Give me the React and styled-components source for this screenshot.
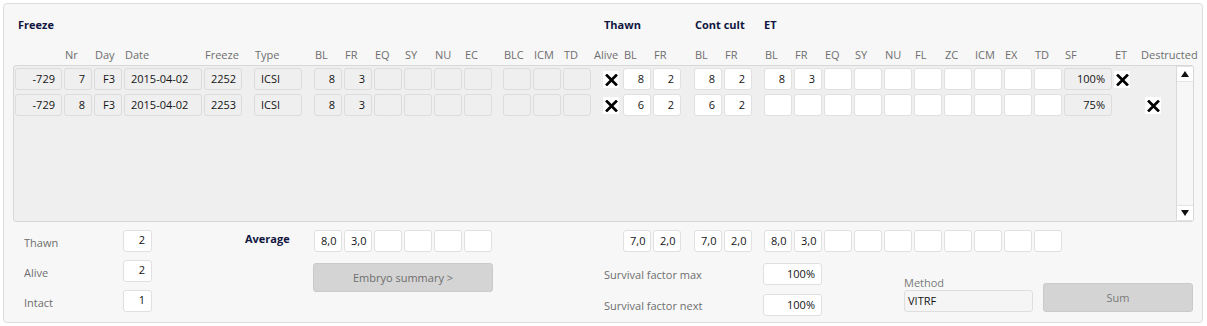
import React from 'react'
import styled, { createGlobalStyle } from 'styled-components'

const GlobalStyle = createGlobalStyle`
  body {
    margin: 0;
    background: #fff;
    font-family: "Open Sans", "Liberation Sans", sans-serif;
    font-size: 11px;
  }
`

// key, header label, width, margin-left, kind, align, inset (for X marks)
const COLUMNS = [
  { key: 'id', label: '', w: 47, ml: 0 },
  { key: 'nr', label: 'Nr' },
  { key: 'day', label: 'Day' },
  { key: 'date', label: 'Date', w: 78, align: 'left' },
  { key: 'fz', label: 'Freeze', w: 38 },
  { key: 'type', label: 'Type', w: 48, ml: 12, align: 'left' },
  { key: 'fbl', label: 'BL', ml: 12 },
  { key: 'ffr', label: 'FR' },
  { key: 'feq', label: 'EQ' },
  { key: 'fsy', label: 'SY' },
  { key: 'fnu', label: 'NU' },
  { key: 'fec', label: 'EC' },
  { key: 'blc', label: 'BLC', ml: 11 },
  { key: 'icm', label: 'ICM' },
  { key: 'td', label: 'TD' },
  { key: 'alive', label: 'Alive', kind: 'mark', inset: 10 },
  { key: 'tbl', label: 'BL', kind: 'in' },
  { key: 'tfr', label: 'FR', kind: 'in' },
  { key: 'cbl', label: 'BL', ml: 13, kind: 'in' },
  { key: 'cfr', label: 'FR', kind: 'in' },
  { key: 'ebl', label: 'BL', ml: 12, kind: 'in' },
  { key: 'efr', label: 'FR', kind: 'in' },
  { key: 'eeq', label: 'EQ', kind: 'in' },
  { key: 'esy', label: 'SY', kind: 'in' },
  { key: 'enu', label: 'NU', kind: 'in' },
  { key: 'efl', label: 'FL', kind: 'in' },
  { key: 'ezc', label: 'ZC', kind: 'in' },
  { key: 'eicm', label: 'ICM', kind: 'in' },
  { key: 'eex', label: 'EX', kind: 'in' },
  { key: 'etd', label: 'TD', kind: 'in' },
  { key: 'sf', label: 'SF', w: 48 },
  { key: 'et', label: 'ET', w: 24, kind: 'mark', inset: 0 },
  { key: 'des', label: 'Destructed', w: 34, kind: 'mark', inset: 5 },
]

const ROWS = [
  { id: '-729', nr: '7', day: 'F3', date: '2015-04-02', fz: '2252', type: 'ICSI', fbl: '8', ffr: '3',
    alive: true, tbl: '8', tfr: '2', cbl: '8', cfr: '2', ebl: '8', efr: '3', sf: '100%', et: true },
  { id: '-729', nr: '8', day: 'F3', date: '2015-04-02', fz: '2253', type: 'ICSI', fbl: '8', ffr: '3',
    alive: true, tbl: '6', tfr: '2', cbl: '6', cfr: '2', sf: '75%', des: true },
]

const TITLES = [
  { text: 'Freeze', w: 586 },
  { text: 'Thawn', w: 91 },
  { text: 'Cont cult', w: 69 },
  { text: 'ET', w: 60 },
]

const FREEZE_AVG = ['8,0', '3,0', '', '', '', '']
const AFTER_AVG = [
  { v: '7,0', ml: 0 }, { v: '2,0' },
  { v: '7,0', ml: 13 }, { v: '2,0' },
  { v: '8,0', ml: 12 }, { v: '3,0' }, { v: '' }, { v: '' }, { v: '' },
  { v: '' }, { v: '' }, { v: '' }, { v: '' }, { v: '' },
]

const STATS = [
  { label: 'Thawn', value: '2' },
  { label: 'Alive', value: '2' },
  { label: 'Intact', value: '1' },
]

const XMark = () => (
  <svg width="13" height="12" viewBox="0 0 13 12">
    <path d="M2 1.5 L11 10.5 M11 1.5 L2 10.5" stroke="#000" strokeWidth="2.7" strokeLinecap="square" />
  </svg>
)

const Arrow = ({ down }) => (
  <svg width="8" height="6" viewBox="0 0 8 6">
    <path d={down ? 'M0 0 H8 L4 6 Z' : 'M0 6 H8 L4 0 Z'} fill="#111" />
  </svg>
)

const App = () => {
  return (
    <>
      <GlobalStyle />
      <Panel>
        <TitleRow>
          {TITLES.map(t => (
            <Title key={t.text} w={t.w}>{t.text}</Title>
          ))}
        </TitleRow>

        <HeaderRow>
          {COLUMNS.map(c => (
            <HeadCell key={c.key} w={c.w ?? 28} ml={c.ml ?? 2}>{c.label}</HeadCell>
          ))}
        </HeaderRow>

        <Grid>
          <Rows>
            {ROWS.map((r, i) => (
              <Row key={i}>
                {COLUMNS.map(c => {
                  const w = c.w ?? 28
                  const ml = c.ml ?? 2
                  if (c.kind === 'mark') {
                    return (
                      <MarkCell key={c.key} w={w} ml={ml} inset={c.inset}>
                        {r[c.key] && <CheckBox><XMark /></CheckBox>}
                      </MarkCell>
                    )
                  }
                  return (
                    <Cell key={c.key} w={w} ml={ml} white={c.kind === 'in'} align={c.align}>
                      {r[c.key] ?? ''}
                    </Cell>
                  )
                })}
              </Row>
            ))}
          </Rows>
          <Scrollbar>
            <ScrollBtn><Arrow /></ScrollBtn>
            <ScrollBtn><Arrow down /></ScrollBtn>
          </Scrollbar>
        </Grid>

        <Bottom>
          <Stats>
            {STATS.map(s => (
              <StatRow key={s.label}>
                <StatLabel>{s.label}</StatLabel>
                <StatBox>{s.value}</StatBox>
              </StatRow>
            ))}
          </Stats>

          <Middle>
            <AvgRow>
              <AvgLabel>Average</AvgLabel>
              {FREEZE_AVG.map((v, i) => (
                <Cell key={i} w={28} ml={2} white align="center">{v}</Cell>
              ))}
            </AvgRow>
            <SummaryButton>Embryo summary &gt;</SummaryButton>
          </Middle>

          <RightBlock>
            <AvgRow>
              {AFTER_AVG.map((a, i) => (
                <Cell key={i} w={28} ml={a.ml ?? 2} white align="center">{a.v}</Cell>
              ))}
            </AvgRow>
            <Lower>
              <SurvivalCol>
                <SurvivalRow>
                  <SurvivalLabel>Survival factor max</SurvivalLabel>
                  <Cell w={59} ml={0} white>100%</Cell>
                </SurvivalRow>
                <SurvivalRow>
                  <SurvivalLabel>Survival factor next</SurvivalLabel>
                  <Cell w={59} ml={0} white>100%</Cell>
                </SurvivalRow>
              </SurvivalCol>
              <MethodCol>
                <MethodLabel>Method</MethodLabel>
                <MethodInput>VITRF</MethodInput>
              </MethodCol>
              <SumButton>Sum</SumButton>
            </Lower>
          </RightBlock>
        </Bottom>
      </Panel>
    </>
  )
}

export default App

const Panel = styled.div`
  box-sizing: border-box;
  margin: 3px;
  width: 1200px;
  height: 320px;
  border: 1px solid #dcdcdc;
  border-radius: 4px;
  background: #f7f7f7;
  padding: 13px 8px 0 9px;
`

const TitleRow = styled.div`
  display: flex;
  height: 15px;
  padding-left: 5px;
`

const Title = styled.div`
  width: ${({ w }) => w}px;
  flex: none;
  font-weight: 700;
  line-height: 15px;
  color: #101640;
  white-space: nowrap;
`

const HeaderRow = styled.div`
  display: flex;
  height: 15px;
  margin-top: 15px;
  padding-left: 2px;
`

const HeadCell = styled.div`
  width: ${({ w }) => w}px;
  margin-left: ${({ ml }) => ml}px;
  flex: none;
  padding-left: 1px;
  box-sizing: border-box;
  line-height: 15px;
  color: #6e6e6e;
  white-space: nowrap;
`

const Grid = styled.div`
  box-sizing: border-box;
  display: flex;
  height: 157px;
  margin-top: 3px;
  border: 1px solid #d8d8d8;
  border-radius: 3px;
  background: #efefef;
`

const Rows = styled.div`
  flex: 1;
  display: flex;
  flex-direction: column;
  gap: 4px;
  padding: 2px 0 0 1px;
`

const Row = styled.div`
  display: flex;
  height: 22px;
`

const Cell = styled.div`
  box-sizing: border-box;
  flex: none;
  width: ${({ w }) => w}px;
  height: 22px;
  margin-left: ${({ ml }) => ml}px;
  padding: 0 6px;
  border: 1px solid ${({ white }) => (white ? '#e0e0e0' : '#dcdcdc')};
  border-radius: 3px;
  background: ${({ white }) => (white ? '#fff' : '#efefef')};
  color: #141414;
  line-height: 20px;
  text-align: ${({ align }) => align || 'right'};
  white-space: nowrap;
  overflow: hidden;
`

const MarkCell = styled.div`
  box-sizing: border-box;
  flex: none;
  display: flex;
  width: ${({ w }) => w}px;
  margin-left: ${({ ml }) => ml}px;
  padding-left: ${({ inset }) => inset}px;
`

const CheckBox = styled.div`
  display: flex;
  align-items: center;
  justify-content: center;
  width: 16px;
  height: 17px;
  margin-top: 3px;
  background: #fff;
`

const Scrollbar = styled.div`
  display: flex;
  flex-direction: column;
  justify-content: space-between;
  width: 16px;
  flex: none;
  border-left: 1px solid #dadada;
  background: #f7f7f7;
  border-radius: 0 3px 3px 0;
`

const ScrollBtn = styled.div`
  display: flex;
  align-items: center;
  justify-content: center;
  height: 16px;
  background: #fff;
  border-top: 1px solid #e4e4e4;
  border-bottom: 1px solid #e4e4e4;
  box-sizing: border-box;
`

const Bottom = styled.div`
  display: flex;
  align-items: flex-start;
  margin-top: 8px;
`

const Stats = styled.div`
  display: flex;
  flex-direction: column;
  gap: 8px;
  margin-left: 11px;
`

const StatRow = styled.div`
  display: flex;
  height: 22px;
`

const StatLabel = styled.div`
  width: 99px;
  padding-top: 5px;
  line-height: 15px;
  color: #6e6e6e;
`

const StatBox = styled.div`
  box-sizing: border-box;
  width: 29px;
  height: 22px;
  padding: 0 6px;
  border: 1px solid #e0e0e0;
  border-radius: 3px;
  background: #fff;
  color: #141414;
  line-height: 17px;
  text-align: right;
`

const Middle = styled.div`
  display: flex;
  flex-direction: column;
  margin-left: 93px;
`

const AvgRow = styled.div`
  display: flex;
  height: 22px;
`

const AvgLabel = styled.div`
  width: 67px;
  font-weight: 700;
  color: #101640;
  line-height: 17px;
`

const SummaryButton = styled.div`
  box-sizing: border-box;
  width: 180px;
  height: 29px;
  margin: 11px 0 0 68px;
  border: 1px solid #cacaca;
  border-radius: 3px;
  background: #d4d4d4;
  color: #6e6e6e;
  line-height: 27px;
  text-align: center;
`

const RightBlock = styled.div`
  display: flex;
  flex-direction: column;
  margin-left: 111px;
  padding-left: 19px;
`

const Lower = styled.div`
  display: flex;
  align-items: flex-start;
  margin: 11px 0 0 -19px;
`

const SurvivalCol = styled.div`
  display: flex;
  flex-direction: column;
  gap: 9px;
`

const SurvivalRow = styled.div`
  display: flex;
  align-items: center;
  height: 22px;
`

const SurvivalLabel = styled.div`
  width: 159px;
  color: #6e6e6e;
`

const MethodCol = styled.div`
  display: flex;
  flex-direction: column;
  width: 129px;
  margin: 13px 0 0 82px;
`

const MethodLabel = styled.div`
  line-height: 14px;
  color: #7a7a7a;
`

const MethodInput = styled.div`
  box-sizing: border-box;
  height: 22px;
  padding-left: 3px;
  border: 1px solid #dedede;
  border-radius: 3px;
  background: #f5f5f5;
  color: #141414;
  line-height: 20px;
`

const SumButton = styled.div`
  box-sizing: border-box;
  width: 150px;
  height: 29px;
  margin: 20px 0 0 10px;
  border: 1px solid #cacaca;
  border-radius: 3px;
  background: #d4d4d4;
  color: #7a7a7a;
  line-height: 27px;
  text-align: center;
`
